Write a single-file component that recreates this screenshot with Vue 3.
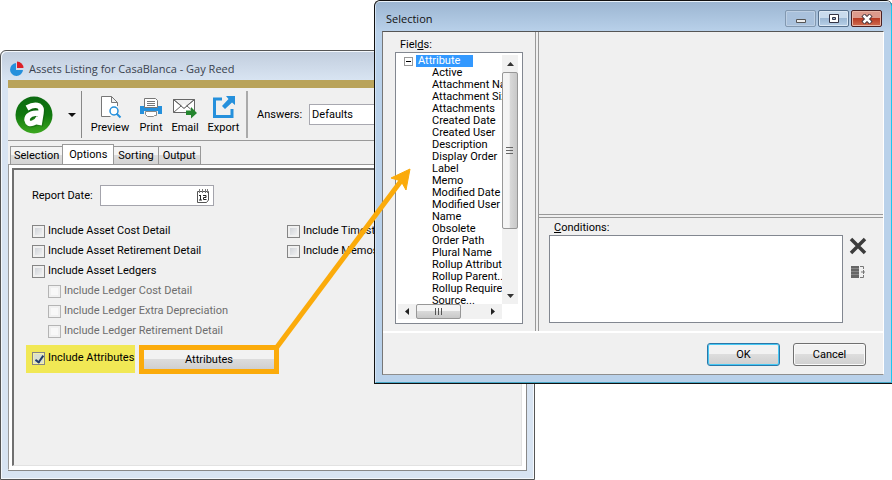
<script setup>
import { ref } from 'vue'

const tabs = ['Selection', 'Options', 'Sorting', 'Output']
const activeTab = ref('Options')
const fields = [
  'Active', 'Attachment Name', 'Attachment Size', 'Attachments', 'Created Date', 'Created User',
  'Description', 'Display Order', 'Label', 'Memo', 'Modified Date', 'Modified User', 'Name',
  'Obsolete', 'Order Path', 'Plural Name', 'Rollup Attribute', 'Rollup Parent...',
  'Rollup Required', 'Source...',
]
const mainOptions = ['Include Asset Cost Detail', 'Include Asset Retirement Detail', 'Include Asset Ledgers']
const ledgerOptions = ['Include Ledger Cost Detail', 'Include Ledger Extra Depreciation', 'Include Ledger Retirement Detail']
const otherOptions = ['Include Timestamps', 'Include Memos']
const includeAttributes = ref(true)
const reportDate = ref('')
const conditions = ref('')
</script>

<template>
  <main class="desktop">
    <section class="listing">
      <header class="listing-title">
        <svg width="16" height="16" viewBox="0 0 16 16">
          <path d="M7 2A6.500 6.500 0 1 0 14 9H7z" fill="#2590dc" />
          <path d="M8 0.500A6.500 6.500 0 0 1 14.500 7H8z" fill="#dd1f26" />
        </svg>
        <span>Assets Listing for CasaBlanca - Gay Reed</span>
      </header>
      <div class="listing-client">
        <div class="gold"></div>
        <div class="toolbar">
          <button class="app-button" aria-label="Application menu">
            <svg width="38" height="38" viewBox="0 0 38 38">
              <defs>
                <linearGradient id="orb" x1="0" y1="0" x2="0" y2="1">
                  <stop offset="0" stop-color="#0c6a12" />
                  <stop offset="0.5" stop-color="#11780f" />
                  <stop offset="1" stop-color="#3da820" />
                </linearGradient>
              </defs>
              <circle cx="19" cy="19" r="18.500" fill="url(#orb)" />
              <path d="M12 13Q19 9 24 11Q27 13 26 17L24 29M25 17Q12 17 12 24Q13 29 18 27Q23 25 24 21" fill="none" stroke="#0a5010" stroke-opacity=".4" stroke-width="6" transform="translate(1 1)" />
              <path d="M12 12Q19 8 24 10Q27 12 26 17L24 29M25 17Q12 17 12 24Q13 29 18 27Q23 25 24 21" fill="none" stroke="#fff" stroke-width="5.500" />
            </svg>
            <svg width="8" height="4" viewBox="0 0 8 4"><path d="M0 0H8L4 4z" fill="#111" /></svg>
          </button>
          <button class="tool">
            <svg width="24" height="24" viewBox="0 0 24 24">
              <path d="M12.500 21.500H3.500V1.500H13.500L19.500 7.500V11M13.500 1.500V7.500H19.500" fill="#fff" stroke="#777" />
              <circle cx="16" cy="16" r="4" fill="#fff" stroke="#2590dc" stroke-width="1.500" />
              <path d="M18.500 18.500L22.500 22.500" stroke="#2590dc" stroke-width="2" />
            </svg>
            <span>Preview</span>
          </button>
          <button class="tool">
            <svg width="24" height="24" viewBox="0 0 24 24">
              <path d="M1 11H23V19H19V16H5V19H1z" fill="#2590dc" />
              <path d="M5.500 12.500V3.500H16.500L18.500 5.500V12.500z" fill="#fff" stroke="#777" />
              <path d="M8 6.500H16M8 8.500H16M8 10.500H16" stroke="#777" />
              <path d="M6.500 16.500H17.500V20.500H15.500L14.500 21.500H8.500L6.500 19.500z" fill="#fff" stroke="#888" />
            </svg>
            <span>Print</span>
          </button>
          <button class="tool">
            <svg width="24" height="24" viewBox="0 0 24 24">
              <path d="M.5 4.500H21.500V17.500H.5zM.5 4.500L11 13L21.500 4.500M.5 17.500L8 11M21.500 17.500L14 11" fill="#fff" stroke="#666" />
              <path d="M11 9L13.500 11L11 13L8 11z" fill="#fff" />
              <path d="M.5 4.500L11 13.500L21.500 4.500" fill="none" stroke="#666" />
              <path d="M13 15.500H18V12L24 18L18 23.500V20H13z" fill="#24852e" />
            </svg>
            <span>Email</span>
          </button>
          <button class="tool">
            <svg width="24" height="24" viewBox="0 0 24 24">
              <path d="M10 4H2.500V21.500H20V14" fill="none" stroke="#2590dc" stroke-width="3" />
              <path d="M14 1H23V10L20 7.500L13 14L10 11L16.500 4z" fill="#2590dc" />
            </svg>
            <span>Export</span>
          </button>
          <div class="answers">
            <label for="answers">Answers:</label>
            <select id="answers"><option>Defaults</option></select>
          </div>
        </div>
        <nav class="tabs">
          <button v-for="t in tabs" :key="t" class="tab" :class="{ active: t === activeTab }" @click="activeTab = t">{{ t }}</button>
        </nav>
        <div class="page">
          <div class="panel">
            <div class="date-row">
              <label for="date">Report Date:</label>
              <div class="date-box">
                <input id="date" v-model="reportDate" type="text" />
                <button class="calendar" aria-label="Pick a date">
                  <svg width="14" height="14" viewBox="0 0 14 14">
                    <path d="M1.500 2.500H12.500V11L10.500 13.500H1.500z" fill="#fff" stroke="#555" />
                    <path d="M3.500 0V4M6.500 0V4M9.500 0V4M11.500 0V4" stroke="#777" />
                    <path d="M4.500 6V11M3 6.500H4.500M3 11H6M7 6.500H10V8.500H7.500V10.500H10.500" fill="none" stroke="#222" />
                  </svg>
                </button>
              </div>
            </div>
            <div class="options">
              <div class="stack">
                <label v-for="o in mainOptions" :key="o" class="check"><input type="checkbox" /><span>{{ o }}</span></label>
                <label v-for="o in ledgerOptions" :key="o" class="check nested"><input type="checkbox" disabled /><span>{{ o }}</span></label>
              </div>
              <div class="stack">
                <label v-for="o in otherOptions" :key="o" class="check"><input type="checkbox" /><span>{{ o }}</span></label>
              </div>
            </div>
            <div class="attributes">
              <label class="check marked"><input v-model="includeAttributes" type="checkbox" /><span>Include Attributes</span></label>
              <button class="attributes-button">Attributes</button>
            </div>
          </div>
        </div>
      </div>
    </section>

    <section class="dialog">
      <div class="frame">
        <header class="dialog-title">
          <span>Selection</span>
          <div class="window-buttons">
            <button class="win faded" aria-label="Minimize">
              <svg width="12" height="10" viewBox="0 0 12 10"><path d="M1.500 5.500H10.500V8.500H1.500z" fill="#eee" stroke="#555" /></svg>
            </button>
            <button class="win" aria-label="Maximize">
              <svg width="12" height="10" viewBox="0 0 12 10"><path d="M1.500 .5H10.500V8.500H1.500zM4.500 3.500V5.500H7.500V3.500z" fill="#fff" fill-rule="evenodd" stroke="#334" /></svg>
            </button>
            <button class="win close" aria-label="Close">
              <svg width="12" height="10" viewBox="0 0 12 10"><path d="M2 1L10 9M10 1L2 9" stroke="#44333a" stroke-width="4.500" /><path d="M2.500 1.500L9.500 8.500M9.500 1.500L2.500 8.500" stroke="#fff" stroke-width="2.500" /></svg>
            </button>
          </div>
        </header>
        <div class="dialog-client">
          <div class="panes">
            <div class="fields">
              <div class="label">Fiel<u>d</u>s:</div>
              <div class="listbox">
                <div class="tree">
                  <div class="root">
                    <button class="toggle" aria-label="Collapse"></button>
                    <span class="root-name">Attribute</span>
                  </div>
                  <ul>
                    <li v-for="f in fields" :key="f">{{ f }}</li>
                  </ul>
                </div>
                <div class="vbar">
                  <button class="arrow" aria-label="Scroll up"><svg width="7" height="4" viewBox="0 0 7 4"><path d="M3.500 0L7 4H0z" fill="#333" /></svg></button>
                  <div class="vthumb"><svg width="8" height="8" viewBox="0 0 8 8"><path d="M0 .5H7M0 3.500H7M0 6.500H7" stroke="#666" /></svg></div>
                  <button class="arrow" aria-label="Scroll down"><svg width="7" height="4" viewBox="0 0 7 4"><path d="M0 0H7L3.500 4z" fill="#333" /></svg></button>
                </div>
                <div class="hbar">
                  <button class="arrow" aria-label="Scroll left"><svg width="4" height="7" viewBox="0 0 4 7"><path d="M4 0V7L0 3.500z" fill="#222" /></svg></button>
                  <div class="hthumb"><svg width="8" height="8" viewBox="0 0 8 8"><path d="M.5 0V7M3.500 0V7M6.500 0V7" stroke="#555" /></svg></div>
                  <button class="arrow last" aria-label="Scroll right"><svg width="4" height="7" viewBox="0 0 4 7"><path d="M0 0L4 3.500L0 7z" fill="#222" /></svg></button>
                </div>
              </div>
            </div>
            <div class="right">
              <div class="blank"></div>
              <div class="conditions">
                <div class="conditions-main">
                  <label class="label" for="conditions"><u>C</u>onditions:</label>
                  <textarea id="conditions" v-model="conditions"></textarea>
                </div>
                <div class="side">
                  <button aria-label="Remove condition"><svg width="18" height="18" viewBox="0 0 18 18"><path d="M2 2L16 16M16 2L2 16" stroke="#3c3c3c" stroke-width="3.500" /></svg></button>
                  <button aria-label="Group conditions"><svg width="16" height="14" viewBox="0 0 16 14"><path d="M1 1H9V13H1z" fill="#666" /><path d="M1 3.500H9M1 6.500H9M1 9.500H9" stroke="#888" /><path d="M10 1.500H13.500V4M10 12.500H13.500V10M13.500 5V9M11 7H15" fill="none" stroke="#777" /></svg></button>
                </div>
              </div>
            </div>
          </div>
          <footer>
            <button class="push default">OK</button>
            <button class="push">Cancel</button>
          </footer>
        </div>
      </div>
    </section>

    <svg class="pointer" width="420" height="360" viewBox="0 0 420 360">
      <path d="M277 347L401 181" stroke="#fbab0b" stroke-width="5" />
      <path d="M410 169L406 190L401 181L391 178z" fill="#fbab0b" stroke="#fbab0b" />
    </svg>
  </main>
</template>

<style>
body { margin: 0; background: #fff; }
</style>

<style scoped>
* { box-sizing: border-box; }
.desktop {
  position: relative;
  min-height: 480px;
  overflow: hidden;
  font: 11px/14px Roboto, "Noto Sans", sans-serif;
  color: #000;
}
button, select, input, textarea { font: inherit; color: inherit; margin: 0; padding: 0; }
button { background: none; border: 0; }
svg { display: block; flex: none; }

.listing {
  position: absolute;
  inset: 50px 357px 0 0;
  display: flex;
  flex-direction: column;
  padding: 0 7px 8px;
  border: 1px solid #555;
  border-radius: 6px 6px 0 0;
  background: linear-gradient(#c1cddd, #d8e4f2 29px);
  box-shadow: inset 1px 1px #f4f8fc, inset -1px -1px #f4f8fc;
}
.listing-title { display: flex; align-items: center; gap: 4px; height: 29px; padding: 6px 1px 0; font-family: "Open Sans", sans-serif; color: #39424e; }
.listing-client { flex: 1; display: flex; flex-direction: column; background: #f0f0f0; border-right: 1px solid #888; border-bottom: 1px solid #888; }
.gold { height: 8px; background: #b9a35a; }
.toolbar { display: flex; height: 53px; padding: 3px 0 2px 7px; border-bottom: 1px solid #999; }
.app-button { display: flex; align-items: center; gap: 15px; padding-right: 5px; margin-right: 4px; border-right: 1px solid #888; width: 67px; }
.tool { display: flex; flex-direction: column; align-items: center; gap: 2px; width: 34px; padding-top: 4px; }
.tool:nth-child(2) { width: 48px; }
.tool:nth-child(5) { width: 43px; }
.answers { flex: 1; display: flex; align-items: center; gap: 7px; padding-left: 9px; margin-left: 1px; border-left: 2px solid #aaa; }
.answers select { appearance: none; flex: 1; height: 21px; padding: 0 2px; background: #fff; border: 1px solid #a8a8b0; border-radius: 0; }
.tabs { display: flex; align-items: flex-end; height: 23px; padding-left: 2px; }
.tab { height: 18px; padding: 0 4px; border: 1px solid #999; border-bottom: 0; margin-left: -1px; background: linear-gradient(#f4f4f4 50%, #ddd 50%, #d4d4d4); white-space: nowrap; }
.tab:first-child { margin-left: 0; padding: 0 3px; }
.tab.active { height: 20px; padding: 0 6px; background: #fff; }
.page { flex: 1; display: flex; padding: 3px; background: #fff; border: 1px solid #999; border-right-color: #fff; border-bottom-color: #fff; }
.panel { flex: 1; padding: 15px 16px 0 14px; background: #f0f0f0; border: 2px solid #707070; border-right: 1px solid #e2e2e2; border-bottom: 1px solid #e2e2e2; }
.date-row { display: flex; align-items: center; gap: 7px; padding-left: 4px; }
.date-box { display: flex; align-items: center; width: 114px; height: 21px; padding-right: 3px; background: #fff; border: 1px solid #a4a4ac; }
.date-box input { flex: 1; min-width: 0; border: 0; outline: 0; background: none; }
.options { display: grid; grid-template-columns: 255px 1fr; padding: 15px 0 0 4px; }
.stack { display: flex; flex-direction: column; }
.check { display: flex; align-items: center; gap: 3px; height: 20px; white-space: nowrap; }
.check input {
  appearance: none;
  flex: none;
  width: 13px;
  height: 13px;
  border: 1px solid #858585;
  background: linear-gradient(135deg, #c8ccd2, #f8f8f8);
  box-shadow: inset 0 0 0 2px #f0f0f0;
}
.check input:disabled { border-color: #b4b4b4; background: #f8f8f8; }
.check input:checked { position: relative; background: #dce2e8; }
.check input:checked::after { content: ""; position: absolute; left: 4px; top: 1px; width: 3px; height: 7px; border: solid #213a6a; border-width: 0 2px 2px 0; transform: rotate(35deg); }
.nested { padding-left: 16px; color: #6d6d6d; }
.attributes { display: flex; gap: 4px; margin-top: 4px; }
.marked { width: 109px; height: 28px; margin-left: -2px; padding: 0 0 2px 6px; background: #f1e855; }
.marked input { box-shadow: inset 0 0 0 1px #f4f0a0; }
.marked input:checked { background: #d9dfd0; }
.attributes-button { width: 140px; height: 29px; border: 5px solid #fbab0b; background: linear-gradient(#f2f2f2 50%, #dcdcdc 50%, #cfcfcf); }

.dialog {
  position: absolute;
  inset: 0 0 auto 374px;
  background: #000;
  border: 1px solid #111;
  border-right: 0;
  border-radius: 6px 6px 0 0;
}
.frame {
  padding: 0 7px 7px 6px;
  border-right: 1px solid #1cc8f0;
  border-bottom: 1px solid #48a8c8;
  border-top: 1px solid #e8f2fa;
  border-left: 1px solid #d4e4f4;
  border-radius: 5px 5px 0 0;
  background: linear-gradient(#9cb6d2, #b9d1ea 30px);
}
.dialog-title { display: flex; justify-content: space-between; height: 29px; padding: 8px 2px 0 4px; font-family: "Open Sans", sans-serif; line-height: 18px; color: #111; }
.window-buttons { display: flex; gap: 2px; }
.win { display: flex; align-items: center; justify-content: center; width: 31px; height: 17px; border: 1px solid #57708c; border-radius: 2px; background: linear-gradient(#c9dbed 50%, #9cb8d4 50%, #b8d0e8); box-shadow: inset 0 0 0 1px #dce8f4; }
.win.faded { border-color: #8298b0; background: #a9c1dc; box-shadow: inset 0 0 0 1px #bed0e4; }
.win.close { border-color: #4a2022; background: linear-gradient(#dc9a8c 50%, #b83c24 50%, #d06c50); box-shadow: inset 0 0 0 1px #e8b4a4; }
.dialog-client { background: #f0f0f0; border: 1px solid #777; border-right-color: #fff; border-top-color: #555; border-bottom-color: #8e8e8e; }
.panes { display: flex; height: 301px; border-bottom: 2px solid #fff; }
.fields { width: 156px; padding: 6px 12px 0 12px; border-right: 4px double #999; }
.label { display: block; padding-left: 5px; line-height: 14px; }
.listbox { display: grid; grid-template-columns: 1fr 16px; grid-template-rows: 1fr 15px; height: 272px; padding: 2px 4px 4px 2px; background: #fff; border: 1px solid #828790; }
.tree { min-width: 0; overflow: hidden; line-height: 12px; white-space: nowrap; }
.root { display: flex; align-items: center; gap: 3px; padding-left: 6px; height: 12px; }
.toggle { position: relative; width: 9px; height: 9px; border: 1px solid #999; background: #fff; }
.toggle::after { content: ""; position: absolute; left: 1px; top: 3px; width: 5px; height: 1px; background: #000; }
.root-name { width: 57px; padding-left: 2px; background: #3399ff; color: #fff; }
.tree ul { margin: 0; padding: 0 0 0 34px; list-style: none; }
.vbar { display: flex; flex-direction: column; background: #f1f1f1; }
.arrow { display: flex; align-items: center; justify-content: center; width: 16px; height: 17px; }
.vthumb { display: flex; align-items: center; justify-content: center; height: 157px; margin-bottom: auto; border: 1px solid #979797; border-radius: 2px; background: linear-gradient(90deg, #f4f4f4 45%, #d9d9d9 50%, #c8c8c8); }
.hbar { display: flex; background: #f1f1f1; }
.hbar .arrow { height: 15px; width: 18px; }
.hbar .last { margin-left: auto; }
.hthumb { display: flex; align-items: center; justify-content: center; width: 45px; border: 1px solid #979797; border-radius: 2px; background: linear-gradient(#f4f4f4 45%, #d9d9d9 50%, #c8c8c8); }
.right { flex: 1; min-width: 0; display: flex; flex-direction: column; }
.blank { height: 186px; border-bottom: 4px double #999; }
.conditions { display: flex; gap: 6px; padding: 3px 16px 0 10px; }
.conditions-main { flex: 1; }
.conditions textarea { display: block; width: 100%; height: 88px; border: 1px solid #828790; border-radius: 0; background: #fff; resize: none; outline: 0; }
.side { display: flex; flex-direction: column; align-items: center; gap: 10px; padding-top: 16px; }
footer { display: flex; justify-content: flex-end; gap: 13px; padding: 10px 17px 8px; }
.push { width: 73px; height: 23px; border: 1px solid #707070; border-radius: 3px; background: linear-gradient(#f2f2f2 50%, #dddddd 50%, #cfcfcf); box-shadow: inset 0 0 0 1px #fafafa; }
.push.default { border-color: #2c77a8; box-shadow: inset 0 0 0 1px #46c8f4; }
.pointer { position: absolute; left: 0; top: 0; pointer-events: none; }
</style>
